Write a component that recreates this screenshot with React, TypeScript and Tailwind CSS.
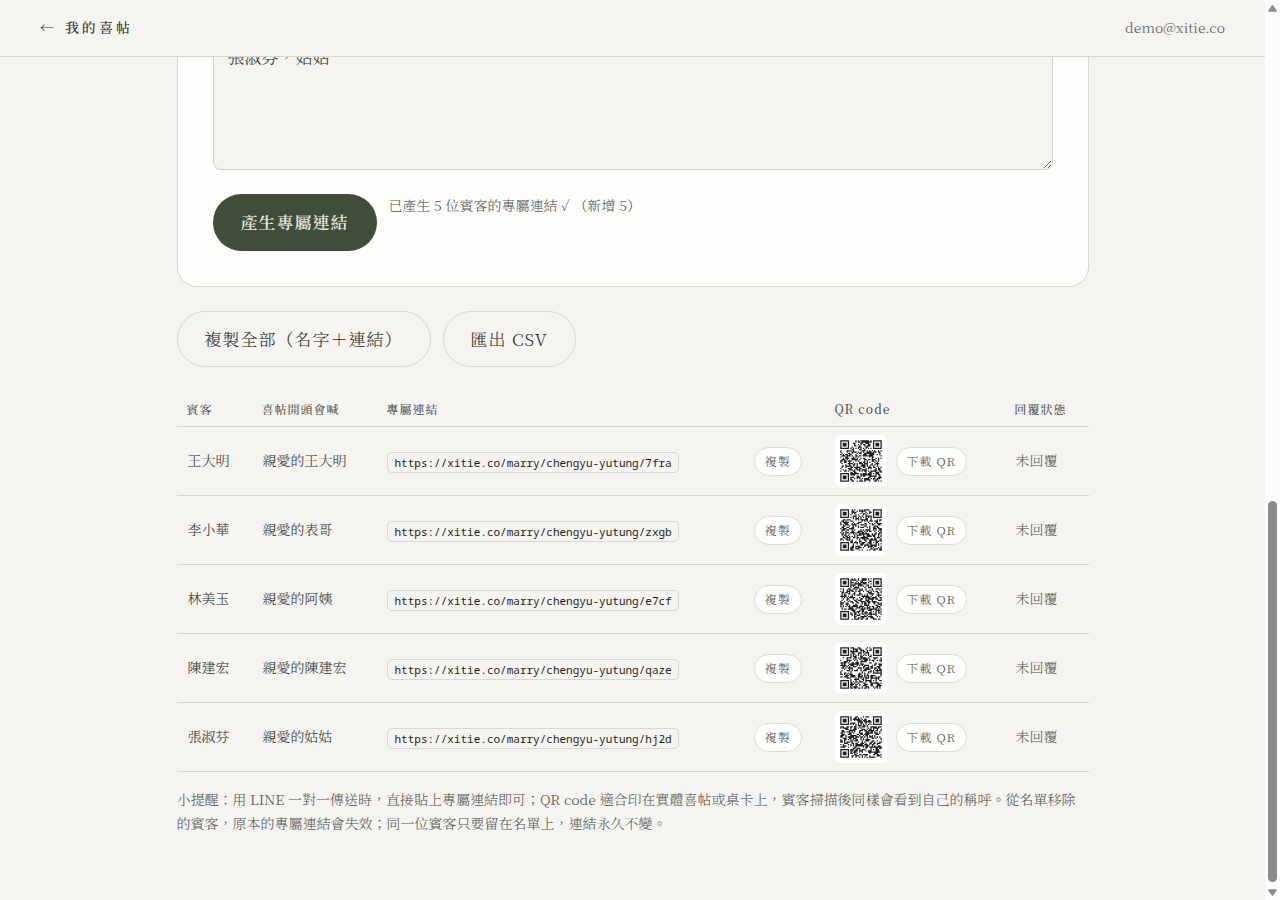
import { useState } from 'react'

type Guest = {
  name: string
  greeting: string
  slug: string
}

const guests: Guest[] = [
  { name: '王大明', greeting: '親愛的王大明', slug: '7fra' },
  { name: '李小華', greeting: '親愛的表哥', slug: 'zxgb' },
  { name: '林美玉', greeting: '親愛的阿姨', slug: 'e7cf' },
  { name: '陳建宏', greeting: '親愛的陳建宏', slug: 'qaze' },
  { name: '張淑芬', greeting: '親愛的姑姑', slug: 'hj2d' },
]

const BASE_URL = 'https://xitie.co/marry/chengyu-yutung/'
const QR_SIZE = 33

// ring + centre dot, measured from the middle of the pattern
const inMarker = (x: number, y: number, cx: number, cy: number, outer: number) => {
  const d = Math.max(Math.abs(x - cx), Math.abs(y - cy))
  return d === outer || d <= outer - 2
}

function qrPath(text: string) {
  let seed = 7
  for (const ch of text) seed = (seed * 31 + ch.charCodeAt(0)) >>> 0
  let d = ''
  for (let y = 0; y < QR_SIZE; y++) {
    for (let x = 0; x < QR_SIZE; x++) {
      seed = (seed * 1664525 + 1013904223) >>> 0
      let dark = seed / 4294967296 > 0.5
      if (x < 8 && y < 8) dark = x < 7 && y < 7 && inMarker(x, y, 3, 3, 3)
      else if (x > 24 && y < 8) dark = x > 25 && y < 7 && inMarker(x, y, 29, 3, 3)
      else if (x < 8 && y > 24) dark = x < 7 && y > 25 && inMarker(x, y, 3, 29, 3)
      else if (x > 23 && x < 29 && y > 23 && y < 29) dark = inMarker(x, y, 26, 26, 2)
      else if (x === 6 || y === 6) dark = (x + y) % 2 === 0
      if (dark) d += `M${x} ${y}h1v1h-1z`
    }
  }
  return d
}

function QrCode({ text }: { text: string }) {
  return (
    <svg
      viewBox="-1 -1 35 35"
      role="img"
      aria-label="QR code"
      className="size-[52px] shrink-0 rounded-md bg-white p-1"
    >
      <path d={qrPath(text)} fill="#1c1f1b" />
    </svg>
  )
}

function SmallButton({ children }: { children: React.ReactNode }) {
  return (
    <button
      type="button"
      className="h-[29px] whitespace-nowrap rounded-full border border-[#dcdcd6] bg-[#fdfdfb] px-[10px] text-[12px] leading-[26px] tracking-[1px] text-[#4f554d]"
    >
      {children}
    </button>
  )
}

function OutlineButton({ children }: { children: React.ReactNode }) {
  return (
    <button
      type="button"
      className="h-14 whitespace-nowrap rounded-full border border-[#d8d8d2] px-[27px] text-[17px] tracking-[1px] text-[#252a23]"
    >
      {children}
    </button>
  )
}

function GuestRow({ guest }: { guest: Guest }) {
  const url = BASE_URL + guest.slug
  return (
    <tr className="border-b border-[#d5d5cf] text-[14px] text-[#2c322a]">
      <td className="px-[11px] pt-2 pb-[10px]">{guest.name}</td>
      <td className="px-[11px] pt-2 pb-[10px]">{guest.greeting}</td>
      <td className="px-[10px] py-2">
        <code className="whitespace-nowrap rounded-[5px] border border-[#d8d8d2] pr-[6px] pl-[7px] py-[2px] font-['Noto_Sans_Mono','DejaVu_Sans_Mono',monospace] text-[11px] font-normal text-[#1c1f1b]">
          {url}
        </code>
      </td>
      <td className="px-[10px] py-2">
        <SmallButton>複製</SmallButton>
      </td>
      <td className="px-[10px] py-2">
        <div className="flex items-center gap-[9px]">
          <QrCode text={url} />
          <SmallButton>下載 QR</SmallButton>
        </div>
      </td>
      <td className="px-[11px] pt-2 pb-[10px] text-[#50564e]">未回覆</td>
    </tr>
  )
}

function Scrollbar() {
  return (
    <div aria-hidden="true" className="flex w-[15px] shrink-0 flex-col items-center bg-[#fcfcfb] text-[#8b8b89]">
      <svg viewBox="0 0 15 15" className="w-[15px] shrink-0" fill="currentColor">
        <path d="M7.5 5.8 11 11H4z" stroke="currentColor" strokeWidth="1.6" strokeLinejoin="round" />
      </svg>
      <div className="flex min-h-0 w-[9px] flex-1 flex-col justify-end pb-[3px]">
        <div className="h-[44%] rounded-full bg-[#8b8b89]" />
      </div>
      <svg viewBox="0 0 15 15" className="w-[15px] shrink-0" fill="currentColor">
        <path d="M7.5 10 11 5H4z" stroke="currentColor" strokeWidth="1.6" strokeLinejoin="round" />
      </svg>
    </div>
  )
}

export default function App() {
  const [names, setNames] = useState('張淑芬，姑姑')

  return (
    <div
      lang="zh-Hant"
      className="flex h-screen bg-[#f5f4f0] font-['Noto_Serif_TC','Noto_Serif_CJK_TC','Noto_Serif','Liberation_Serif','Noto_Sans_CJK_TC',serif] font-light text-[#2c322a]"
    >
      <div className="flex min-w-0 flex-1 flex-col">
        <header className="flex h-[57px] shrink-0 items-center justify-between border-b border-[#d5d5cf] px-10 pb-[2px]">
          <a href="#cards" className="flex gap-2 text-[14px] font-medium tracking-[3px]">
            <span>←</span>
            <span>我的喜帖</span>
          </a>
          <span className="text-[14px] text-[#5a6058]">demo@xitie.co</span>
        </header>

        {/* anchored to the end of the page */}
        <main className="flex min-h-0 flex-1 flex-col justify-end overflow-hidden">
          <div className="mx-auto w-full max-w-[960px] px-6 pb-[65px]">
            <section className="rounded-[20px] border border-[#d8d8d2] bg-[#fdfdfb] p-[35px]">
              <textarea
                aria-label="賓客名單"
                value={names}
                onChange={e => setNames(e.target.value)}
                className="block h-[140px] w-full resize-y rounded-lg border border-[#d0d0ca] bg-[#f5f4f0] px-[14px] py-[11px] text-[17px] leading-[30px]"
              />
              <div className="mt-6 flex items-start gap-3">
                <button
                  type="button"
                  className="h-[57px] shrink-0 rounded-full bg-[#3f4d3a] px-7 text-[17px] font-semibold tracking-[1px] text-[#e8e9dd]"
                >
                  產生專屬連結
                </button>
                <p className="text-[14px] leading-[22px] text-[#50564e]">已產生 5 位賓客的專屬連結 ✓ （新增 5）</p>
              </div>
            </section>

            <div className="mt-6 flex gap-3">
              <OutlineButton>複製全部（名字＋連結）</OutlineButton>
              <OutlineButton>匯出 CSV</OutlineButton>
            </div>

            <table className="mt-6 w-full table-fixed border-collapse text-left">
              <thead>
                <tr className="h-9 border-b border-[#d5d5cf] text-[12px] tracking-[1px] text-[#4f554d]">
                  <th className="w-[75px] px-[10px] pt-[2px] font-medium">賓客</th>
                  <th className="w-[125px] px-[10px] pt-[2px] font-medium">喜帖開頭會喊</th>
                  <th className="px-[10px] pt-[2px] font-medium">專屬連結</th>
                  <th className="w-[81px]" />
                  <th className="w-[180px] px-[10px] pt-[2px] font-medium">QR code</th>
                  <th className="w-[84px] px-[10px] pt-[2px] font-medium">回覆狀態</th>
                </tr>
              </thead>
              <tbody>
                {guests.map(guest => (
                  <GuestRow key={guest.slug} guest={guest} />
                ))}
              </tbody>
            </table>

            <p className="mt-[15px] text-[14px] leading-6 text-[#50564e]">
              小提醒：用 LINE 一對一傳送時，直接貼上專屬連結即可；QR code 適合印在實體喜帖或桌卡上，賓客掃描後同樣會看到自己的稱呼。從名單移除的賓客，原本的專屬連結會失效；同一位賓客只要留在名單上，連結永久不變。
            </p>
          </div>
        </main>
      </div>
      <Scrollbar />
    </div>
  )
}
